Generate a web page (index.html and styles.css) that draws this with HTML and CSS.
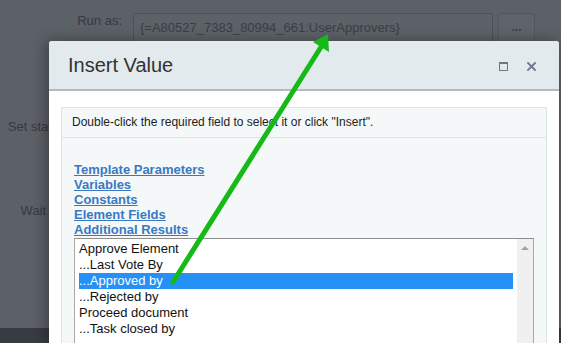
FILE: index.html
```html
<!DOCTYPE html>
<html lang="en">
<head>
    <meta charset="UTF-8">
    <title>Insert Value</title>
    <link rel="stylesheet" href="styles.css">
</head>
<body>
    <!-- Dimmed task settings form behind the dialog -->
    <div class="page">
        <div class="row row-run">
            <label class="field-label">Run as:</label>
            <div class="field-input">{=A80527_7383_80994_661:UserApprovers}</div>
            <div class="field-button">...</div>
        </div>
        <div class="row row-status">
            <label class="field-label">Set status for tasks:</label>
        </div>
        <div class="row row-wait">
            <label class="field-label">Wait for approval:</label>
        </div>
        <div class="page-footer"></div>
    </div>

    <!-- Insert Value dialog -->
    <div class="dialog">
        <div class="dialog-header">
            <span class="dialog-title">Insert Value</span>
            <div class="dialog-tools">
                <svg class="tool-icon" width="9" height="9" viewBox="0 0 9 9">
                    <rect x="0.5" y="1" width="8" height="7.5" fill="none" stroke="#6b7888" stroke-width="1"/>
                    <line x1="0" y1="1" x2="9" y2="1" stroke="#6b7888" stroke-width="2"/>
                </svg>
                <svg class="tool-icon" width="9" height="9" viewBox="0 0 9 9">
                    <path d="M1 1 L8 8 M8 1 L1 8" stroke="#6b7888" stroke-width="1.8" stroke-linecap="square"/>
                </svg>
            </div>
        </div>
        <div class="dialog-body">
            <div class="panel">
                <div class="panel-hint">Double-click the required field to select it or click "Insert".</div>
                <div class="panel-content">
                    <div class="groups">
                        <a href="#">Template Parameters</a>
                        <a href="#">Variables</a>
                        <a href="#">Constants</a>
                        <a href="#">Element Fields</a>
                        <a href="#">Additional Results</a>
                    </div>
                    <div class="listbox">
                        <ul class="list-items">
                            <li>Approve Element</li>
                            <li>...Last Vote By</li>
                            <li class="selected">...Approved by</li>
                            <li>...Rejected by</li>
                            <li>Proceed document</li>
                            <li>...Task closed by</li>
                        </ul>
                        <div class="list-scroll"><span class="arrow-up"></span></div>
                    </div>
                </div>
            </div>
        </div>
    </div>

    <!-- Annotation arrow -->
    <svg class="pointer-arrow" width="561" height="343" viewBox="0 0 561 343">
        <line x1="173" y1="282" x2="321" y2="47" stroke="#17b917" stroke-width="5" stroke-linecap="round"/>
        <polygon points="328,34 329,52 313,42" fill="#17b917"/>
    </svg>
</body>
</html>
```

FILE: styles.css
```css
body, html {
    margin: 0;
    padding: 0;
    width: 100%;
    height: 100%;
    overflow: hidden;
    background-color: #5c6067; /* page dimmed by the modal overlay */
    font-family: "Liberation Sans", Arial, sans-serif;
    color: #3a3d42;
}

.page {
    display: flex;
    flex-direction: column;
    height: 343px;
}

.row {
    display: flex;
    align-items: flex-start;
}

.row-run {
    margin-top: 13px;
}

.row-status {
    margin-top: 77px;
}

.row-wait {
    margin-top: 69px;
}

.field-label {
    width: 122px;
    text-align: right;
    font-size: 13px;
    line-height: 15px;
    white-space: nowrap;
    color: #373a3f;
}

.field-input {
    box-sizing: border-box;
    width: 360px;
    height: 29px;
    margin-left: 11px;
    padding: 0 6px;
    border: 1px solid #4d5157;
    border-radius: 2px;
    background-color: #5d6168;
    font-size: 13px;
    line-height: 27px;
    color: #3b3e43;
}

.field-button {
    box-sizing: border-box;
    width: 37px;
    height: 29px;
    margin-left: 5px;
    border: 1px solid #53575d;
    border-radius: 3px;
    background-color: #5f636a;
    text-align: center;
    font-size: 12px;
    font-weight: bold;
    line-height: 27px;
    color: #3d4045;
}

.page-footer {
    margin-top: auto;
    height: 15px;
    background-color: #383b41;
}

/* Dialog */
.dialog {
    position: absolute;
    left: 49px;
    top: 41px;
    width: 510px;
    height: 302px;
    overflow: hidden;
    background-color: #ffffff;
    box-shadow: -3px 0 14px rgba(0, 0, 0, 0.35);
    border-radius: 3px 3px 0 0;
}

.dialog-header {
    display: flex;
    align-items: center;
    justify-content: space-between;
    height: 48px;
    padding: 0 23px 0 19px;
    background-color: #e2eaed;
    border-bottom: 2px solid #b3bbbf;
    border-radius: 3px 3px 0 0;
}

.dialog-title {
    font-size: 20px;
    color: #333333;
}

.dialog-tools {
    display: flex;
    gap: 19px;
    padding-top: 2px;
}

.tool-icon {
    display: block;
}

.dialog-body {
    padding: 16px 12px 0 12px;
}

.panel {
    border: 1px solid #dce5e8;
    background-color: #f4f8f9;
}

.panel-hint {
    height: 29px;
    padding-left: 10px;
    border-bottom: 1px solid #dce5e8;
    font-size: 12px;
    line-height: 29px;
    color: #222222;
}

.panel-content {
    padding: 24px 12px 0 12px;
}

.groups {
    display: flex;
    flex-direction: column;
    align-items: flex-start;
}

.groups a {
    font-size: 13px;
    font-weight: bold;
    line-height: 15px;
    color: #3a78c3;
    text-decoration: underline;
}

.listbox {
    display: flex;
    height: 110px;
    margin-top: 1px;
    border: 1px solid #a8a8a8;
    border-top-color: #8e8e8e;
    background-color: #ffffff;
}

.list-items {
    flex: 1;
    list-style: none;
    margin: 0;
    padding: 2px 4px 0 4px;
}

.list-items li {
    font-size: 13px;
    line-height: 16px;
    color: #111111;
    white-space: nowrap;
}

.list-items li.selected {
    background-color: #2590f6;
    color: #ffffff;
}

.list-scroll {
    width: 16px;
    background-color: #f0f0f0;
    display: flex;
    justify-content: center;
}

.arrow-up {
    width: 0;
    height: 0;
    margin-top: 7px;
    border-left: 4px solid transparent;
    border-right: 4px solid transparent;
    border-bottom: 4px solid #a3a3a3;
}

.pointer-arrow {
    position: absolute;
    left: 0;
    top: 0;
    pointer-events: none;
}
```
